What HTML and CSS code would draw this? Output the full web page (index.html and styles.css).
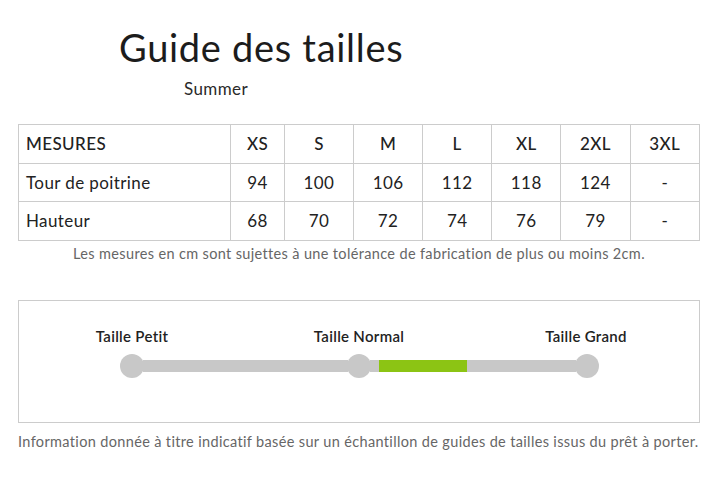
FILE: index.html
```html
<!DOCTYPE html>
<html lang="fr">
<head>
<meta charset="utf-8">
<link rel="stylesheet" href="styles.css">
</head>
<body>
<div class="page">
  <header class="head">
    <h1 class="title">Guide des tailles</h1>
    <p class="subtitle">Summer</p>
  </header>
  <table class="sizes">
    <thead>
      <tr>
        <th class="label">MESURES</th>
        <th>XS</th><th>S</th><th>M</th><th>L</th><th>XL</th><th>2XL</th><th>3XL</th>
      </tr>
    </thead>
    <tbody>
      <tr>
        <td class="label">Tour de poitrine</td>
        <td>94</td><td>100</td><td>106</td><td>112</td><td>118</td><td>124</td><td>-</td>
      </tr>
      <tr>
        <td class="label">Hauteur</td>
        <td>68</td><td>70</td><td>72</td><td>74</td><td>76</td><td>79</td><td>-</td>
      </tr>
    </tbody>
  </table>
  <p class="note center">Les mesures en cm sont sujettes à une tolérance de fabrication de plus ou moins 2cm.</p>

  <section class="fit">
    <div class="fit-labels">
      <span>Taille Petit</span>
      <span>Taille Normal</span>
      <span>Taille Grand</span>
    </div>
    <div class="track">
      <span class="dot"></span>
      <span class="seg"></span>
      <span class="dot"></span>
      <span class="seg"><span class="active"></span></span>
      <span class="dot"></span>
    </div>
  </section>
  <p class="note">Information donnée à titre indicatif basée sur un échantillon de guides de tailles issus du prêt à porter.</p>
</div>
</body>
</html>
```
FILE: styles.css
```css
html, body {
  margin: 0;
  padding: 0;
  background: #fff;
}
body {
  font-family: "Lato", "Open Sans", sans-serif;
  color: #222;
}
.page {
  padding: 0 19px 0 18px;
}
.head {
  padding-top: 25px;
}
.title {
  margin: 0 0 0 101px;
  font-size: 38px;
  font-weight: 400;
  letter-spacing: 0.7px;
  line-height: 44px;
  color: #1c1c1c;
}
.subtitle {
  margin: 10px 0 0 166px;
  font-size: 17px;
  letter-spacing: 0.4px;
  line-height: 20px;
  color: #2a2a2a;
}
.sizes {
  margin-top: 25px;
  width: 682px;
  border-collapse: collapse;
  font-size: 17px;
  letter-spacing: 0.4px;
  color: #222;
}
.sizes th, .sizes td {
  border: 1px solid #cccccc;
  height: 37.5px;
  padding: 0 6px;
  text-align: center;
  font-weight: 400;
}
.sizes th {
  font-weight: 500;
}
.sizes .label {
  text-align: left;
  width: 198px;
  padding-left: 7px;
}
.note {
  margin: 3px 0 0;
  font-size: 14.5px;
  letter-spacing: 0.35px;
  line-height: 20px;
  color: #666;
}
.center {
  text-align: center;
}
.fit {
  margin-top: 36px;
  border: 1px solid #cccccc;
  height: 123px;
  box-sizing: border-box;
  padding-top: 26px;
}
.fit-labels {
  display: grid;
  grid-template-columns: repeat(3, 227px);
  justify-content: center;
  font-size: 15px;
  font-weight: 600;
  letter-spacing: 0.3px;
  color: #222;
  text-align: center;
  line-height: 18px;
}
.track {
  display: flex;
  align-items: center;
  width: 479px;
  margin: 9px auto 0;
}
.dot {
  flex: none;
  width: 24px;
  height: 24px;
  border-radius: 50%;
  background: #c8c8c8;
}
.seg {
  flex: 1;
  height: 12px;
  background: #c8c8c8;
  margin: 0 -1px;
}
.active {
  display: block;
  margin-left: 9px;
  width: 88px;
  height: 12px;
  background: #8cc414;
}
.fit + .note {
  margin-top: 9px;
  text-align: left;
}
```
